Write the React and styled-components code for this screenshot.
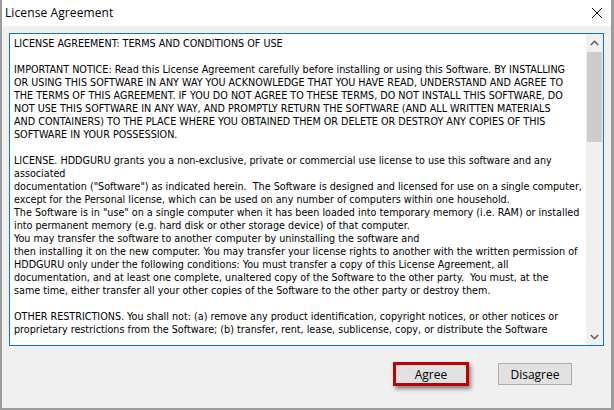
import React from "react";
import styled, { createGlobalStyle } from "styled-components";

const GlobalStyle = createGlobalStyle`
  html, body {
    margin: 0;
    padding: 0;
    background: #ffffff;
  }
  * {
    box-sizing: border-box;
  }
`;

const Window = styled.div`
  width: 614px;
  height: 410px;
  display: flex;
  flex-direction: column;
  border-left: 2px solid #9b9b9b;
  border-right: 3px solid #9b9b9b;
  border-bottom: 2px solid #9b9b9b;
  background: #f0f0f0;
  font-family: "Open Sans", "Noto Sans", sans-serif;
`;

const TitleBar = styled.div`
  height: 26px;
  flex: none;
  background: #ffffff;
  display: flex;
  align-items: center;
  justify-content: space-between;
  padding: 0 7px 1px 3px;
`;

const Title = styled.span`
  font-size: 12px;
  color: #000000;
  letter-spacing: 0.1px;
`;

const CloseButton = styled.button`
  width: 14px;
  height: 14px;
  padding: 0;
  border: none;
  background: transparent;
  display: flex;
  align-items: center;
  justify-content: center;
`;

const Body = styled.div`
  flex: 1;
  display: flex;
  flex-direction: column;
  padding: 7px 7px 0 7px;
`;

const TextBox = styled.div`
  height: 313px;
  display: flex;
  border: 1px solid #0078d7;
  background: #ffffff;
`;

const TextArea = styled.div`
  flex: 1;
  overflow: hidden;
  padding: 3px 0 0 4px;
  font-family: "DejaVu Sans Condensed", "DejaVu Sans", sans-serif;
  font-stretch: condensed;
  font-size: 10.7px;
  color: #000000;
`;

const Line = styled.div`
  height: 13px;
  line-height: 13px;
  white-space: pre;
`;

const Scrollbar = styled.div`
  width: 17px;
  flex: none;
  display: flex;
  flex-direction: column;
  background: #f0f0f0;
`;

const ArrowButton = styled.div`
  height: 17px;
  flex: none;
  display: flex;
  align-items: center;
  justify-content: center;
`;

const Track = styled.div`
  flex: 1;
  padding: 1px 1px;
`;

const Thumb = styled.div`
  height: 90px;
  background: #cdcdcd;
`;

const ButtonRow = styled.div`
  display: flex;
  justify-content: flex-end;
  gap: 29px;
  padding: 16px 32px 0 0;
`;

const DialogButton = styled.button`
  width: ${(p) => (p.$highlight ? "76px" : "74px")};
  height: ${(p) => (p.$highlight ? "24px" : "22px")};
  margin-top: ${(p) => (p.$highlight ? "0" : "1px")};
  padding: 0;
  background: #e1e1e1;
  border: ${(p) => (p.$highlight ? "3px solid #bf0000" : "1px solid #adadad")};
  box-shadow: ${(p) =>
    p.$highlight ? "2px 3px 4px rgba(0, 0, 0, 0.45)" : "none"};
  font-family: "Open Sans", "Noto Sans", sans-serif;
  font-size: 12px;
  color: #000000;
`;

const lines = [
  "LICENSE AGREEMENT: TERMS AND CONDITIONS OF USE",
  "",
  "IMPORTANT NOTICE: Read this License Agreement carefully before installing or using this Software. BY INSTALLING",
  "OR USING THIS SOFTWARE IN ANY WAY YOU ACKNOWLEDGE THAT YOU HAVE READ, UNDERSTAND AND AGREE TO",
  "THE TERMS OF THIS AGREEMENT. IF YOU DO NOT AGREE TO THESE TERMS, DO NOT INSTALL THIS SOFTWARE, DO",
  "NOT USE THIS SOFTWARE IN ANY WAY, AND PROMPTLY RETURN THE SOFTWARE (AND ALL WRITTEN MATERIALS",
  "AND CONTAINERS) TO THE PLACE WHERE YOU OBTAINED THEM OR DELETE OR DESTROY ANY COPIES OF THIS",
  "SOFTWARE IN YOUR POSSESSION.",
  "",
  "LICENSE. HDDGURU grants you a non-exclusive, private or commercial use license to use this software and any",
  "associated",
  'documentation ("Software") as indicated herein.  The Software is designed and licensed for use on a single computer,',
  "except for the Personal license, which can be used on any number of computers within one household.",
  'The Software is in "use" on a single computer when it has been loaded into temporary memory (i.e. RAM) or installed',
  "into permanent memory (e.g. hard disk or other storage device) of that computer.",
  "You may transfer the software to another computer by uninstalling the software and",
  "then installing it on the new computer. You may transfer your license rights to another with the written permission of",
  "HDDGURU only under the following conditions: You must transfer a copy of this License Agreement, all",
  "documentation, and at least one complete, unaltered copy of the Software to the other party.  You must, at the",
  "same time, either transfer all your other copies of the Software to the other party or destroy them.",
  "",
  "OTHER RESTRICTIONS. You shall not: (a) remove any product identification, copyright notices, or other notices or",
  "proprietary restrictions from the Software; (b) transfer, rent, lease, sublicense, copy, or distribute the Software",
];

const Chevron = ({ up }) => (
  <svg width="9" height="6" viewBox="0 0 9 6">
    <polyline
      points={up ? "0.8,5 4.5,1.3 8.2,5" : "0.8,1 4.5,4.7 8.2,1"}
      fill="none"
      stroke="#606060"
      strokeWidth="1.6"
    />
  </svg>
);

const App = () => {
  return (
    <>
      <GlobalStyle />
      <Window>
        <TitleBar>
          <Title>License Agreement</Title>
          <CloseButton aria-label="Close">
            <svg width="12" height="12" viewBox="0 0 12 12">
              <path d="M1 1 L11 11 M11 1 L1 11" stroke="#000" strokeWidth="1" />
            </svg>
          </CloseButton>
        </TitleBar>
        <Body>
          <TextBox>
            <TextArea>
              {lines.map((l, i) => (
                <Line key={i}>{l}</Line>
              ))}
            </TextArea>
            <Scrollbar>
              <ArrowButton>
                <Chevron up />
              </ArrowButton>
              <Track>
                <Thumb />
              </Track>
              <ArrowButton>
                <Chevron />
              </ArrowButton>
            </Scrollbar>
          </TextBox>
          <ButtonRow>
            <DialogButton $highlight>Agree</DialogButton>
            <DialogButton>Disagree</DialogButton>
          </ButtonRow>
        </Body>
      </Window>
    </>
  );
};

export default App;
